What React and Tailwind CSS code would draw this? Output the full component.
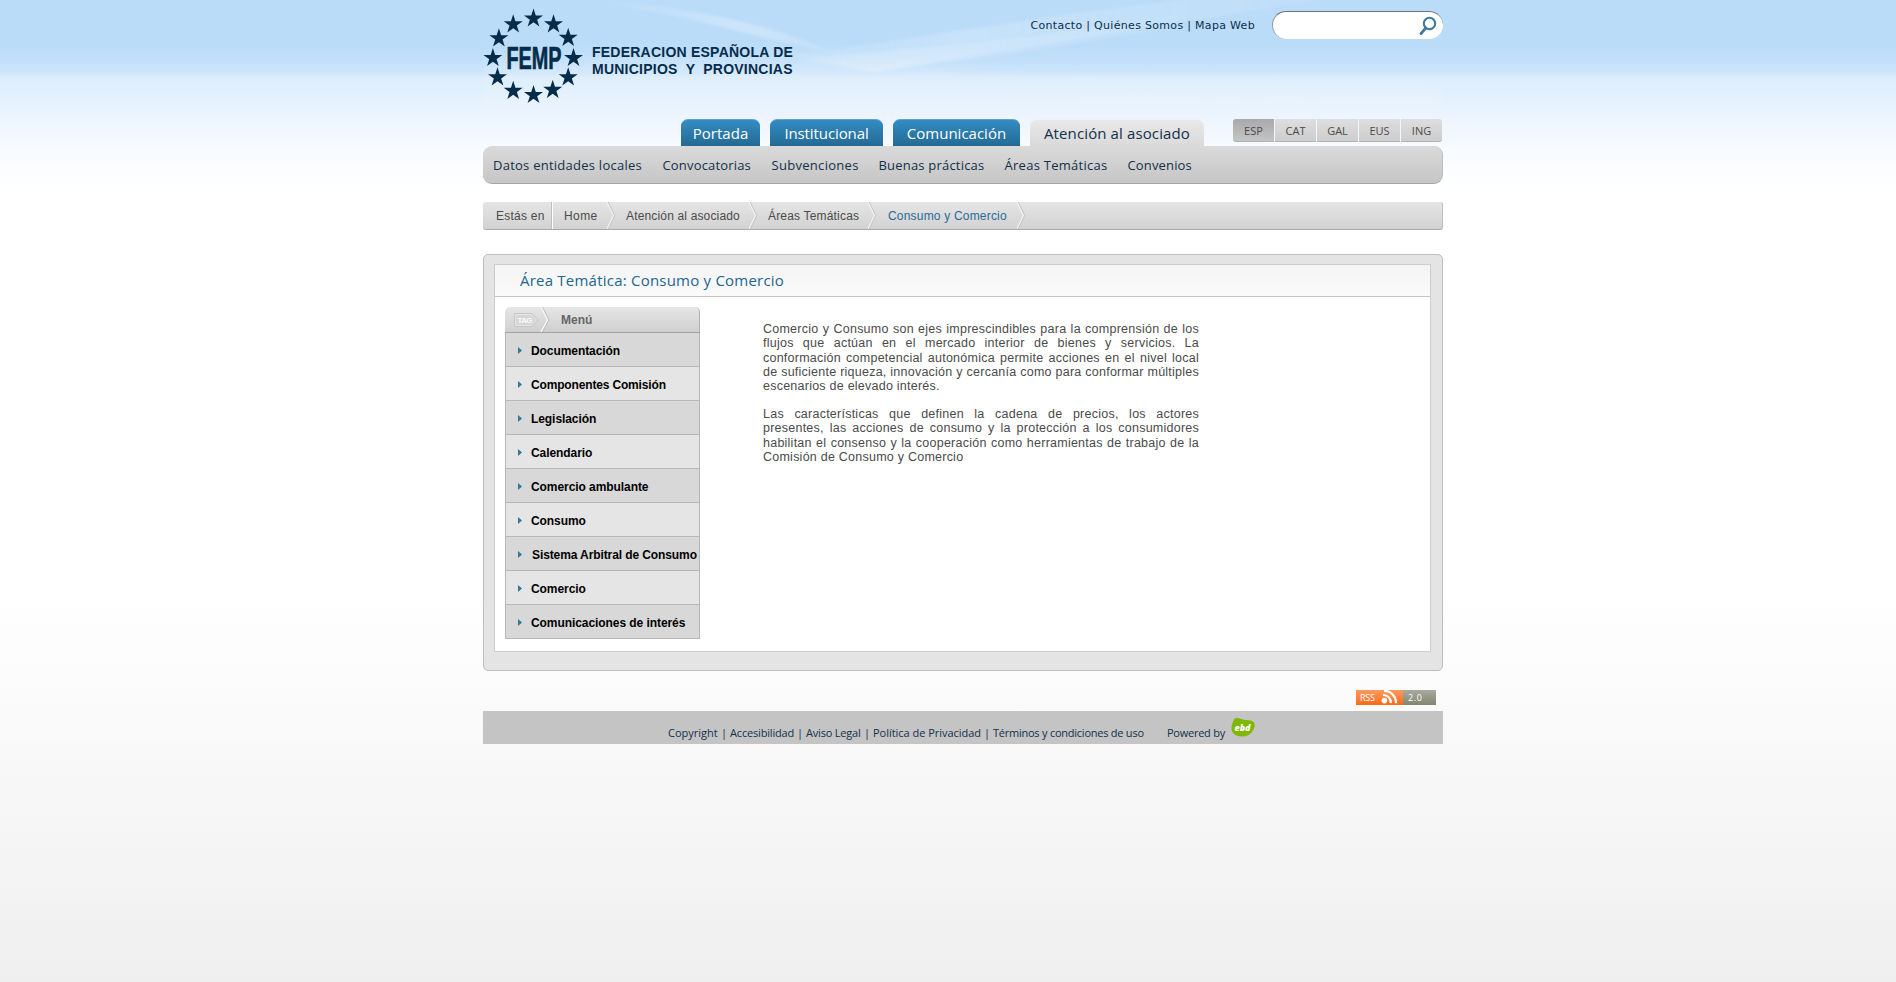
import React from 'react';

const TREB = "font-['Open_Sans','Noto_Sans',sans-serif]";

const STARS = [
  [64.3, 18.5], [84.3, 24.3], [99, 37.8], [104.3, 58], [99, 77.3], [83.5, 89.8],
  [64.3, 95], [44, 90.8], [28.3, 77.3], [23.7, 58], [29.7, 38.3], [44, 24.3],
];

const starPoints = (cx, cy, R) =>
  Array.from({ length: 10 }, (_, i) => {
    const r = i % 2 ? R * 0.385 : R;
    const a = -Math.PI / 2 + (i * Math.PI) / 5;
    return `${(cx + r * Math.cos(a)).toFixed(2)},${(cy + r * Math.sin(a)).toFixed(2)}`;
  }).join(' ');

function Logo() {
  return (
    <svg className="block shrink-0" width="109" height="110" viewBox="13 0 109 110">
      {STARS.map(([x, y], i) => (
        <polygon key={i} points={starPoints(x - 0.8, y, 10)} fill="#052c4a" />
      ))}
      <text x="36.5" y="69.2" fontFamily="Liberation Sans" fontWeight="700" fontSize="32" textLength="55" lengthAdjust="spacingAndGlyphs" fill="#052c4a" stroke="#052c4a" strokeWidth="0.7">FEMP</text>
    </svg>
  );
}

function Swoosh() {
  return (
    <svg className="absolute left-0 top-0" width="960" height="119" viewBox="0 0 960 119">
      <defs>
        <linearGradient id="fadeDown" x1="0" y1="0" x2="0" y2="1">
          <stop offset="0" stopColor="#e9f3fd" stopOpacity="0" />
          <stop offset="0.45" stopColor="#e3f0fc" stopOpacity="0.35" />
          <stop offset="0.75" stopColor="#e9f3fd" stopOpacity="0.7" />
          <stop offset="1" stopColor="#f0f6fe" stopOpacity="0.3" />
        </linearGradient>
        <linearGradient id="ray" x1="0" y1="0" x2="1" y2="0">
          <stop offset="0" stopColor="#fff" stopOpacity="0.08" />
          <stop offset="0.3" stopColor="#fff" stopOpacity="0.18" />
          <stop offset="1" stopColor="#fff" stopOpacity="0.04" />
        </linearGradient>
        <linearGradient id="rayLeft" x1="0" y1="0" x2="1" y2="0">
          <stop offset="0" stopColor="#fff" stopOpacity="0" />
          <stop offset="0.6" stopColor="#fff" stopOpacity="0.26" />
          <stop offset="1" stopColor="#fff" stopOpacity="0.12" />
        </linearGradient>
        <filter id="soft"><feGaussianBlur stdDeviation="1.2" /></filter>
        <filter id="softer"><feGaussianBlur stdDeviation="6" /></filter>
      </defs>
      <path d="M0 50 L200 48 L350 50 L430 68 L560 82 L960 88 L960 119 L0 119Z" fill="url(#fadeDown)" filter="url(#softer)" />
      <g filter="url(#soft)">
        <path d="M120 2 C200 6 270 22 320 40 L350 52 L300 42 C250 30 200 16 120 2Z" fill="url(#rayLeft)" />
        <path d="M310 56 L560 18 L760 -8 L880 -8 L700 22 L540 48 L390 72Z" fill="url(#ray)" />
        <path d="M310 60 L540 38 L700 14 L700 26 L540 52 L390 72Z" fill="url(#ray)" />
      </g>
    </svg>
  );
}

function Header() {
  return (
    <div className="relative flex h-[119px] justify-between">
      <Swoosh />
      <div className="relative flex">
        <Logo />
        <div className="flex flex-col pt-[44px] font-['Liberation_Sans',Arial,sans-serif] text-[14px] font-bold leading-[17px] text-[#052c4a]">
          <span className="whitespace-nowrap tracking-[0.23px]">FEDERACION ESPAÑOLA DE</span>
          <span className="whitespace-pre tracking-[0.24px]">MUNICIPIOS  Y  PROVINCIAS</span>
        </div>
      </div>
      <div className="relative flex items-start">
        <div className="mr-[17px] mt-[17px] whitespace-pre font-['DejaVu_Sans',Verdana,sans-serif] text-[11px] leading-[18px] tracking-[0.31px] text-[#0b2e4c]">Contacto | Quiénes Somos | Mapa Web</div>
        <div className="mt-[11px] flex h-[28px] w-[171px] items-center justify-end rounded-[14px] border-l border-t border-l-[#8d9aa5] border-t-[#6d747b] bg-white pr-[6px]">
          <svg width="18" height="20" viewBox="0 0 18 20" fill="none" stroke="#3b7a9e">
            <circle cx="10.5" cy="7.5" r="5.7" strokeWidth="2.1" />
            <path d="M6.8 11.8 L2 17.6" strokeWidth="2.8" strokeLinecap="round" />
          </svg>
        </div>
      </div>
    </div>
  );
}

const TABS = [
  ['Portada', 'w-[79px] tracking-[0.05px]'],
  ['Institucional', 'ml-[10px] w-[113px] tracking-[-0.1px]'],
  ['Comunicación', 'ml-[10px] w-[127px]'],
];
const LANGS = [
  ['ESP', 'w-[41px] rounded-l-[3px] from-[#a9a9a9] to-[#c4c4c4]'],
  ['CAT', 'w-[41px] from-[#dedede] to-[#cdcdcd]'],
  ['GAL', 'w-[41px] from-[#dedede] to-[#cdcdcd]'],
  ['EUS', 'w-[41px] from-[#dedede] to-[#cdcdcd]'],
  ['ING', 'w-[41px] rounded-r-[3px] from-[#dedede] to-[#cdcdcd]'],
];

function Tabs() {
  return (
    <div className={`relative flex h-[27px] pl-[198px] text-[15px] leading-[27px] ${TREB}`}>
      {TABS.map(([t, c]) => (
        <div key={t} className={`${c} h-[27px] whitespace-nowrap rounded-t-[7px] border-t border-t-[#5fa4cd] bg-gradient-to-b from-[#338cc3] to-[#246a94] text-center text-white`}>{t}</div>
      ))}
      <div className="ml-[10px] h-[27px] w-[174px] whitespace-nowrap rounded-t-[7px] border-t border-t-[#f1f1f1] bg-gradient-to-b from-[#e8e8e8] to-[#dadada] text-center tracking-[0.12px] text-[#12304a]">Atención al asociado</div>
      <div className="ml-auto mr-px flex h-[23px] gap-px text-[11px] leading-[23px] text-[#4a4a4a]">
        {LANGS.map(([t, c]) => (
          <div key={t} className={`${c} border-b border-b-[#b3b3b3] bg-gradient-to-b text-center`}>{t}</div>
        ))}
      </div>
    </div>
  );
}

const SUBNAV = [
  ['Datos entidades locales', 'w-[169.5px] tracking-[0.25px]'],
  ['Convocatorias', 'w-[109px] tracking-[0.17px]'],
  ['Subvenciones', 'w-[107px] tracking-[0.3px]'],
  ['Buenas prácticas', 'w-[126px] tracking-[0.2px]'],
  ['Áreas Temáticas', 'w-[123px] tracking-[0.27px]'],
  ['Convenios', 'w-[80px] tracking-[0.15px]'],
];

function SubNav() {
  return (
    <div className={`relative flex h-[38px] rounded-[9px] border-b border-r border-b-[#a5a5a5] border-r-[#bbbbbb] bg-gradient-to-b from-[#dadada] to-[#c6c6c6] pl-[10px] text-[13px] leading-[38px] text-[#12304a] ${TREB}`}>
      {SUBNAV.map(([t, c]) => (
        <span key={t} className={`${c} whitespace-nowrap`}>{t}</span>
      ))}
    </div>
  );
}

function Chevron() {
  return (
    <svg className="block shrink-0" width="10" height="27" viewBox="0 0 10 27" fill="none">
      <path d="M0 0 L6.5 13.5 L0 27" stroke="#f4f4f4" strokeWidth="1.2" />
      <path d="M1.2 0 L7.7 13.5 L1.2 27" stroke="#c2c2c2" strokeWidth="0.9" />
    </svg>
  );
}

const CRUMBS = [
  ['Home', 'w-[43px] tracking-[0.4px]', 'mr-[9px]'],
  ['Atención al asociado', 'w-[123px] tracking-[0.16px]', 'mr-[9px]'],
  ['Áreas Temáticas', 'w-[100px] tracking-[0.18px]', 'mr-[10px]'],
  ['Consumo y Comercio', 'w-[129px] tracking-[0.19px] text-[#2a6a98]', ''],
];

function Breadcrumb() {
  return (
    <div className="mt-[18px] flex h-[28px] rounded-[3px] border-b border-r border-b-[#a9a9a9] border-r-[#bcbcbc] bg-gradient-to-b from-[#e5e5e5] to-[#d2d2d2] pl-[13px] font-['Liberation_Sans',Arial,sans-serif] text-[12px] leading-[28px] text-[#4b4b4b]">
      <span className="w-[56px] whitespace-nowrap border-r border-r-[#bdbdbd] tracking-[0.23px]">Estás en</span>
      <span className="mr-[11px] w-px bg-white" />
      {CRUMBS.map(([t, c, gap]) => (
        <React.Fragment key={t}>
          <span className={`${c} shrink-0 whitespace-nowrap`}>{t}</span>
          <span className={gap}><Chevron /></span>
        </React.Fragment>
      ))}
    </div>
  );
}

const MENU = [
  'Documentación', 'Componentes Comisión', 'Legislación', 'Calendario', 'Comercio ambulante',
  'Consumo', 'Sistema Arbitral de Consumo', 'Comercio', 'Comunicaciones de interés',
];

function Menu() {
  return (
    <div className="w-[195px] shrink-0 font-['Liberation_Sans',Arial,sans-serif] text-[12px] font-bold">
      <div className="flex h-[26px] items-center rounded-t-[5px] border-b border-r border-b-[#a2a2a2] border-r-[#b0b0b0] bg-gradient-to-b from-[#e6e6e6] to-[#cfcfcf] pl-[8px]">
        <svg className="block shrink-0" width="48" height="25" viewBox="0 0 48 25" fill="none">
          <path d="M1.5 6.5 H19 L25 13 L19 19.5 H1.5Z" fill="#d6d6d6" stroke="#c6c6c6" />
          <path d="M2.5 7.5 H18.5 L23.5 13 L18.5 18.5 H2.5Z" stroke="#e6e6e6" />
          <text x="4.5" y="16.2" fontFamily="Liberation Sans" fontWeight="700" fontSize="8" textLength="15" fill="#fbfbfb">TAG</text>
          <path d="M28 0 L34.500 13 L28 25" stroke="#fbfbfb" strokeWidth="1.3" />
          <path d="M29.500 0 L36 13 L29.500 25" stroke="#b9b9b9" strokeWidth="0.9" />
        </svg>
        <span className="pt-px text-[#666666]">Menú</span>
      </div>
      {MENU.map((t, i) => (
        <div
          key={t}
          className={`flex h-[34px] items-center whitespace-nowrap border-x border-b border-[#b7b7b7] pl-[12px] text-black ${i % 2 ? 'bg-[#e5e5e5]' : 'bg-[#d8d8d8]'}`}
        >
          <svg className="mr-[9px] mt-[2px] shrink-0" width="4" height="7" viewBox="0 0 4 7">
            <path d="M0 0 L4 3.5 L0 7Z" fill="#367898" />
          </svg>
          <span className={`pt-[2px] ${i === 6 ? 'pl-px tracking-[-0.1px]' : i === 1 ? 'tracking-[-0.16px]' : 'tracking-[-0.07px]'}`}>{t}</span>
        </div>
      ))}
    </div>
  );
}

function Panel() {
  return (
    <div className="mt-[24px] h-[417px] rounded-[5px] border border-[#bfbfbf] bg-[#e4e4e4] px-[10px] pt-[9px]">
      <div className="mr-px h-[388px] border border-[#cccccc] bg-white">
        <div className={`h-[32px] border-b border-[#c4c4c4] bg-gradient-to-b from-[#f4f4f4] to-[#fafafa] pl-[25px] text-[15px] leading-[30px] tracking-[0.22px] text-[#23658f] ${TREB}`}>
          Área Temática: Consumo y Comercio
        </div>
        <div className="flex pl-[10px] pt-[10px]">
          <Menu />
          <div className="ml-[63px] w-[436px] pt-[14.8px] text-justify font-['Liberation_Sans',Arial,sans-serif] text-[12.5px] leading-[14.4px] tracking-[0.24px] text-[#4a4a4a]">
            <p className="mb-[13px]">Comercio y Consumo son ejes imprescindibles para la comprensión de los flujos que actúan en el mercado interior de bienes y servicios. La conformación competencial autonómica permite acciones en el nivel local de suficiente riqueza, innovación y cercanía como para conformar múltiples escenarios de elevado interés.</p>
            <p>Las características que definen la cadena de precios, los actores presentes, las acciones de consumo y la protección a los consumidores habilitan el consenso y la cooperación como herramientas de trabajo de la Comisión de Consumo y Comercio</p>
          </div>
        </div>
      </div>
    </div>
  );
}

function Footer() {
  return (
    <>
      <div className="mt-[19px] flex justify-end pr-[7px]">
        <div className={`flex h-[15px] w-[80px] text-[9px] leading-[15px] text-white ${TREB}`}>
          <div className="flex w-[47px] bg-gradient-to-b from-[#fb9a5e] to-[#fb6a0c] pl-[4px]">
            <span className="w-[21px] tracking-[-0.2px]">RSS</span>
            <svg width="17" height="15" viewBox="0 0 17 15" fill="none" stroke="#fff" strokeWidth="2.2">
              <circle cx="3.4" cy="10.600" r="2.800" fill="#fff" stroke="none" />
              <path d="M2 5 A7.500 7.500 0 0 1 9.800 13.200" />
              <path d="M3 0.800 A12 12 0 0 1 15 13.200" />
            </svg>
          </div>
          <div className="w-[33px] bg-gradient-to-b from-[#a9ab9f] to-[#83866f] pl-[5px] tracking-[0.6px]">2.0</div>
        </div>
      </div>
      <div className={`mt-[6px] flex h-[33px] bg-[#c4c4c4] pl-[185px] text-[11px] leading-[44px] text-[#12304a] ${TREB}`}>
        <span className="w-[53px] whitespace-nowrap">Copyright</span>
        <span className="w-[9px]">|</span>
        <span className="w-[67px] whitespace-nowrap tracking-[-0.17px]">Accesibilidad</span>
        <span className="w-[9px]">|</span>
        <span className="w-[58px] whitespace-nowrap tracking-[-0.2px]">Aviso Legal</span>
        <span className="w-[9px]">|</span>
        <span className="w-[111px] whitespace-nowrap tracking-[-0.03px]">Política de Privacidad</span>
        <span className="w-[9px]">|</span>
        <span className="w-[174px] whitespace-nowrap tracking-[-0.24px]">Términos y condiciones de uso</span>
        <span className="w-[63px] whitespace-nowrap tracking-[-0.25px]">Powered by</span>
        <svg className="mt-[6px] block" width="26" height="21" viewBox="0 0 26 21">
          <path d="M3.500 3.500 C4.500 0.300 7 0.700 12 2.200 C17 3.500 21 2.600 23.500 5 C26 8 24 12.500 21.500 15.500 C18.500 19.500 12 20.500 6.500 18.500 C0.500 16.200 0.500 10 3.500 3.500Z" fill="#7fb800" />
          <text x="4.500" y="14" fontFamily="Open Sans" fontWeight="800" fontStyle="italic" fontSize="9.500" textLength="16" lengthAdjust="spacingAndGlyphs" fill="#fff">ebd</text>
        </svg>
      </div>
    </>
  );
}

export default function App() {
  return (
    <div className="h-[982px] overflow-hidden bg-[linear-gradient(to_bottom,#bbdcf9_0px,#bbdcf8_48px,#c3e0f9_62px,#cfe6fb_73px,#dcedfc_78px,#e3f0fc_95px,#eff6fe_125px,#f8fbff_150px,#ffffff_190px,#ffffff_590px,#f9f9f9_745px,#efefef_982px)]">
      <div className="mx-auto w-[960px] translate-x-[15px]">
        <Header />
        <Tabs />
        <SubNav />
        <Breadcrumb />
        <Panel />
        <Footer />
      </div>
    </div>
  );
}
